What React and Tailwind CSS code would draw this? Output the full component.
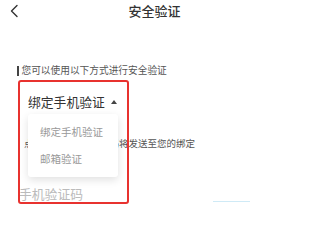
import React from "react";

const Back = () => (
  <svg width="10" height="14" viewBox="0 0 10 14" fill="none">
    <path d="M8 1.5 L2.5 7 L8 12.5" stroke="#333" strokeWidth="1.4" strokeLinecap="round" strokeLinejoin="round" />
  </svg>
);

const App = () => {
  return (
    <div className="relative w-[300px] h-[225px] overflow-hidden bg-white font-['Noto_Sans_CJK_SC',sans-serif]">
      {/* header */}
      <div className="grid grid-cols-[1fr_auto_1fr] items-center h-[21px] pl-[9px]">
        <div className="flex items-center">
          <Back />
        </div>
        <span className="text-[13px] leading-none font-medium text-[#333]">安全验证</span>
        <div />
      </div>

      {/* hint */}
      <div className="flex items-center gap-[3px] pl-[17px] mt-[44px]">
        <span className="w-[1.5px] h-[10px] bg-[#444]" />
        <span className="text-[9.7px] leading-[11px] text-[#555]">您可以使用以下方式进行安全验证</span>
      </div>

      {/* selector */}
      <div className="flex items-center gap-[6px] pl-[28px] mt-[19px]">
        <span className="text-[12.8px] leading-[14px] text-[#333]">绑定手机验证</span>
        <svg width="6" height="4" viewBox="0 0 6 4">
          <path d="M3 0 L6 4 L0 4 Z" fill="#444" />
        </svg>
      </div>

      {/* description */}
      <div className="pl-[24px] mt-[29px] text-[9.5px] leading-[11px] text-[#555] whitespace-nowrap">
        点击下方获取，验证码将发送至您的绑定
      </div>

      {/* input */}
      <div className="flex items-end justify-between pl-[19px] pr-[50px] mt-[38px]">
        <span className="text-[12.8px] leading-[14px] text-[#bbb]">手机验证码</span>
        <span className="w-[37px] h-[1px] bg-[#cfeaf6] mb-[-1px]" />
      </div>

      {/* dropdown menu */}
      <div className="absolute left-[28px] top-[114px] w-[90px] h-[63px] bg-white rounded-[3px] shadow-[0_3px_8px_rgba(0,0,0,0.12)] flex flex-col justify-around pl-[12px] py-[4px]">
        <span className="text-[10.5px] leading-[12px] text-[#999]">绑定手机验证</span>
        <span className="text-[10.5px] leading-[12px] text-[#999]">邮箱验证</span>
      </div>

      {/* red annotation box */}
      <div className="absolute left-[18px] top-[80px] w-[111px] h-[124px] border-2 border-[#e8322f] rounded-[3px]" />
    </div>
  );
};

export default App;
